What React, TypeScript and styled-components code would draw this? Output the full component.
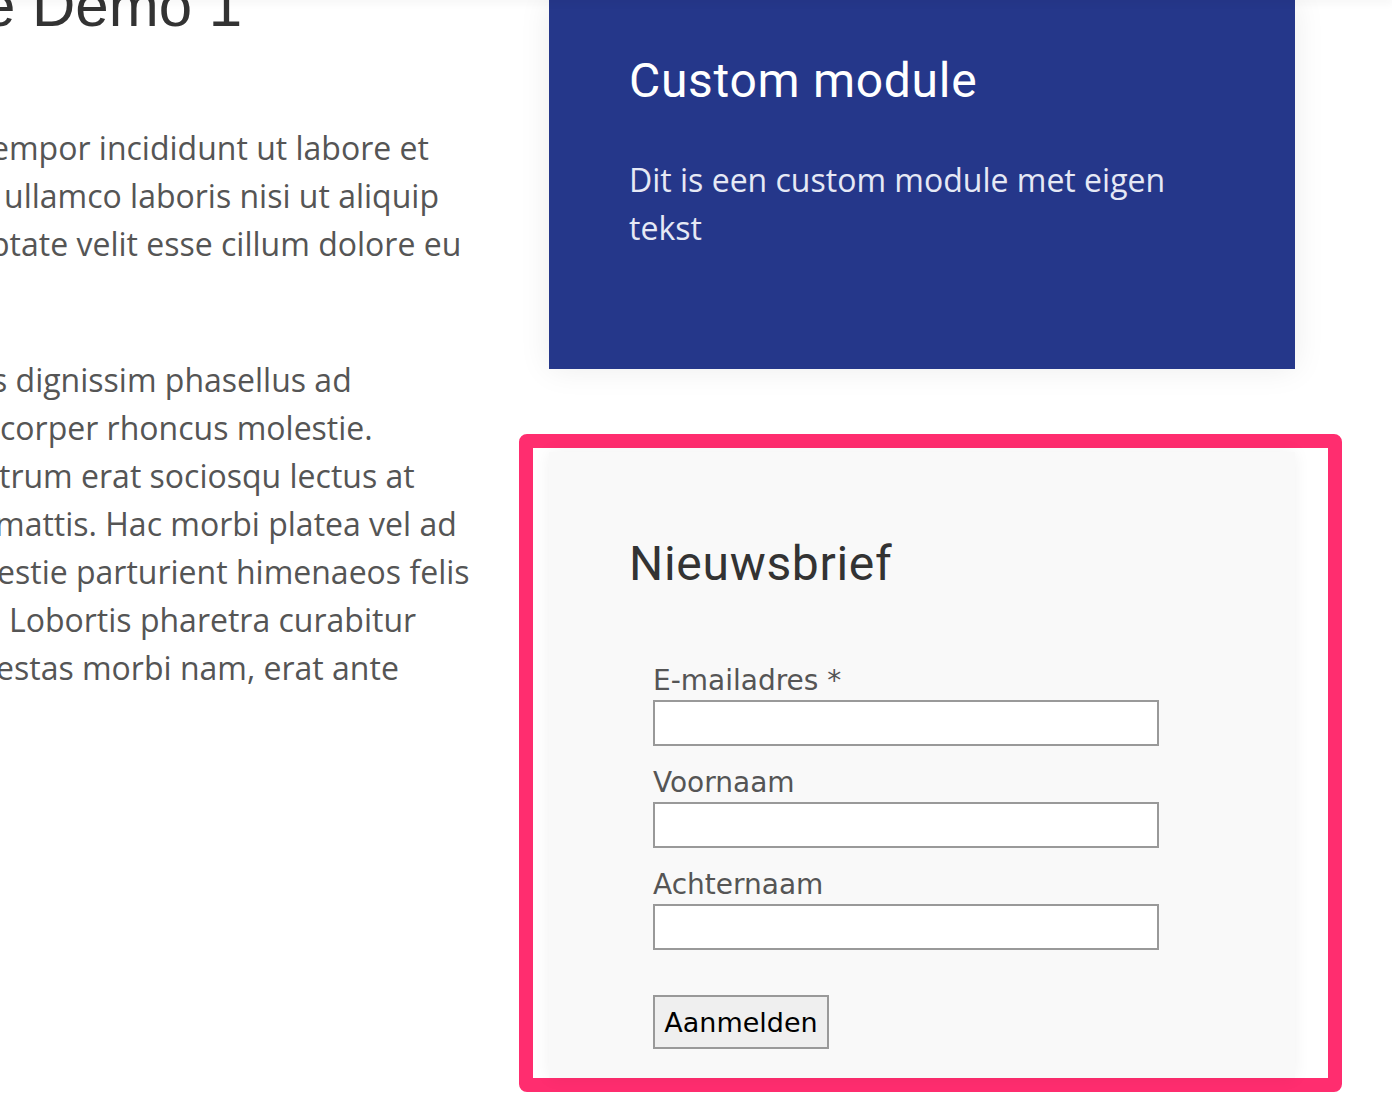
import React from "react";
import styled, { createGlobalStyle } from "styled-components";

const Global = createGlobalStyle`
  html, body {
    margin: 0;
    padding: 0;
    background: #ffffff;
    overflow: hidden;
  }
  body {
    width: 1392px;
    height: 1094px;
    font-family: "Open Sans", "Liberation Sans", sans-serif;
  }
  * { box-sizing: border-box; }
`;

const TopShadow = styled.div`
  position: relative;
  z-index: 10;
  height: 0;
  box-shadow: 0 0 8px 2px rgba(0, 0, 0, 0.07);
`;

const Layout = styled.div`
  display: grid;
  grid-template-columns: 469px 746px;
  column-gap: 80px;
  align-items: start;
`;

const LeftColumn = styled.main`
  overflow: hidden;
  color: #555555;
`;

const PageTitle = styled.h1<{ $shift: number }>`
  margin: -24px 0 0 ${(p) => p.$shift}px;
  font-family: "Liberation Sans", Arial, sans-serif;
  font-weight: 400;
  font-size: 60px;
  line-height: 60px;
  color: #333333;
  white-space: nowrap;
`;

const Paragraph = styled.p<{ $top: number }>`
  margin: ${(p) => p.$top}px 0 0 0;
  font-size: 32px;
  line-height: 48px;
`;

const Line = styled.span<{ $shift: number }>`
  display: block;
  white-space: nowrap;
  margin-left: ${(p) => p.$shift}px;
`;

const RightColumn = styled.aside`
  display: flex;
  flex-direction: column;
`;

const CustomModule = styled.section`
  background: #25378a;
  padding: 52px 80px 117px 80px;
  box-shadow: 0 0 30px rgba(0, 0, 0, 0.08);
`;

const ModuleTitle = styled.h3<{ $light?: boolean }>`
  margin: 0;
  font-family: Roboto, "Liberation Sans", sans-serif;
  font-weight: 400;
  font-size: 48px;
  letter-spacing: 0.7px;
  line-height: 1.2;
  color: ${(p) => (p.$light ? "#ffffff" : "#333333")};
`;

const ModuleText = styled.p`
  margin: 46px 0 0 0;
  font-size: 32px;
  line-height: 48px;
  color: #e6e9f5;
`;

const Highlight = styled.div`
  margin: 65px -47px 0 -30px;
  border: 14px solid #ff2d6f;
  border-radius: 8px;
  padding: 4px 33px 0 16px;
  height: 658px;
  display: flex;
  flex-direction: column;
`;

const NewsletterCard = styled.section`
  flex: 1;
  background: #f9f9f9;
  box-shadow: 0 0 16px rgba(0, 0, 0, 0.06);
  padding: 83px 80px 0 80px;
`;

const Form = styled.form`
  display: flex;
  flex-direction: column;
  align-items: flex-start;
  padding: 0 0 0 24px;
  margin-top: 72px;
`;

const Label = styled.label<{ $first?: boolean }>`
  display: block;
  margin-top: ${(p) => (p.$first ? 0 : 20)}px;
  font-family: "DejaVu Sans", Verdana, sans-serif;
  font-size: 28px;
  line-height: 33px;
  color: #555555;
`;

const Input = styled.input`
  display: block;
  margin: 3px 0 0 0;
  width: 506px;
  height: 46px;
  border: 2px solid #999999;
  background: #ffffff;
  padding: 0 6px;
  font-family: "DejaVu Sans", Verdana, sans-serif;
  font-size: 26px;
  outline: none;
`;

const SubmitButton = styled.button`
  margin-top: 45px;
  width: 176px;
  height: 54px;
  padding: 0;
  border: 2px solid #999999;
  border-radius: 0;
  background: #efefef;
  font-family: "DejaVu Sans", Verdana, sans-serif;
  font-size: 27px;
  color: #000000;
  cursor: pointer;
`;

const paragraphOne: [string, number][] = [
  ["empor incididunt ut labore et", -9],
  ["ullamco laboris nisi ut aliquip", 4],
  ["ptate velit esse cillum dolore eu", -10],
];

const paragraphTwo: [string, number][] = [
  ["s dignissim phasellus ad", -8],
  ["corper rhoncus molestie.", 0],
  ["trum erat sociosqu lectus at", -1],
  ["mattis. Hac morbi platea vel ad", -5],
  ["estie parturient himenaeos felis", -3],
  ["Lobortis pharetra curabitur", 9],
  ["estas morbi nam, erat ante", -4],
];

const fields = [
  { id: "email", label: "E-mailadres *", type: "email" },
  { id: "voornaam", label: "Voornaam", type: "text" },
  { id: "achternaam", label: "Achternaam", type: "text" },
];

export default function App() {
  return (
    <>
      <Global />
      <TopShadow />
      <Layout>
        <LeftColumn>
          <PageTitle $shift={-18}>e Demo 1</PageTitle>
          <Paragraph $top={88}>
            {paragraphOne.map(([t, s]) => (
              <Line key={t} $shift={s}>
                {t}
              </Line>
            ))}
          </Paragraph>
          <Paragraph $top={88}>
            {paragraphTwo.map(([t, s]) => (
              <Line key={t} $shift={s}>
                {t}
              </Line>
            ))}
          </Paragraph>
        </LeftColumn>
        <RightColumn>
          <CustomModule>
            <ModuleTitle $light>Custom module</ModuleTitle>
            <ModuleText>
              Dit is een custom module met eigen
              <br />
              tekst
            </ModuleText>
          </CustomModule>
          <Highlight>
            <NewsletterCard>
              <ModuleTitle>Nieuwsbrief</ModuleTitle>
              <Form onSubmit={(e) => e.preventDefault()}>
                {fields.map((f, i) => (
                  <React.Fragment key={f.id}>
                    <Label htmlFor={f.id} $first={i === 0}>
                      {f.label}
                    </Label>
                    <Input id={f.id} type={f.type} />
                  </React.Fragment>
                ))}
                <SubmitButton type="submit">Aanmelden</SubmitButton>
              </Form>
            </NewsletterCard>
          </Highlight>
        </RightColumn>
      </Layout>
    </>
  );
}
